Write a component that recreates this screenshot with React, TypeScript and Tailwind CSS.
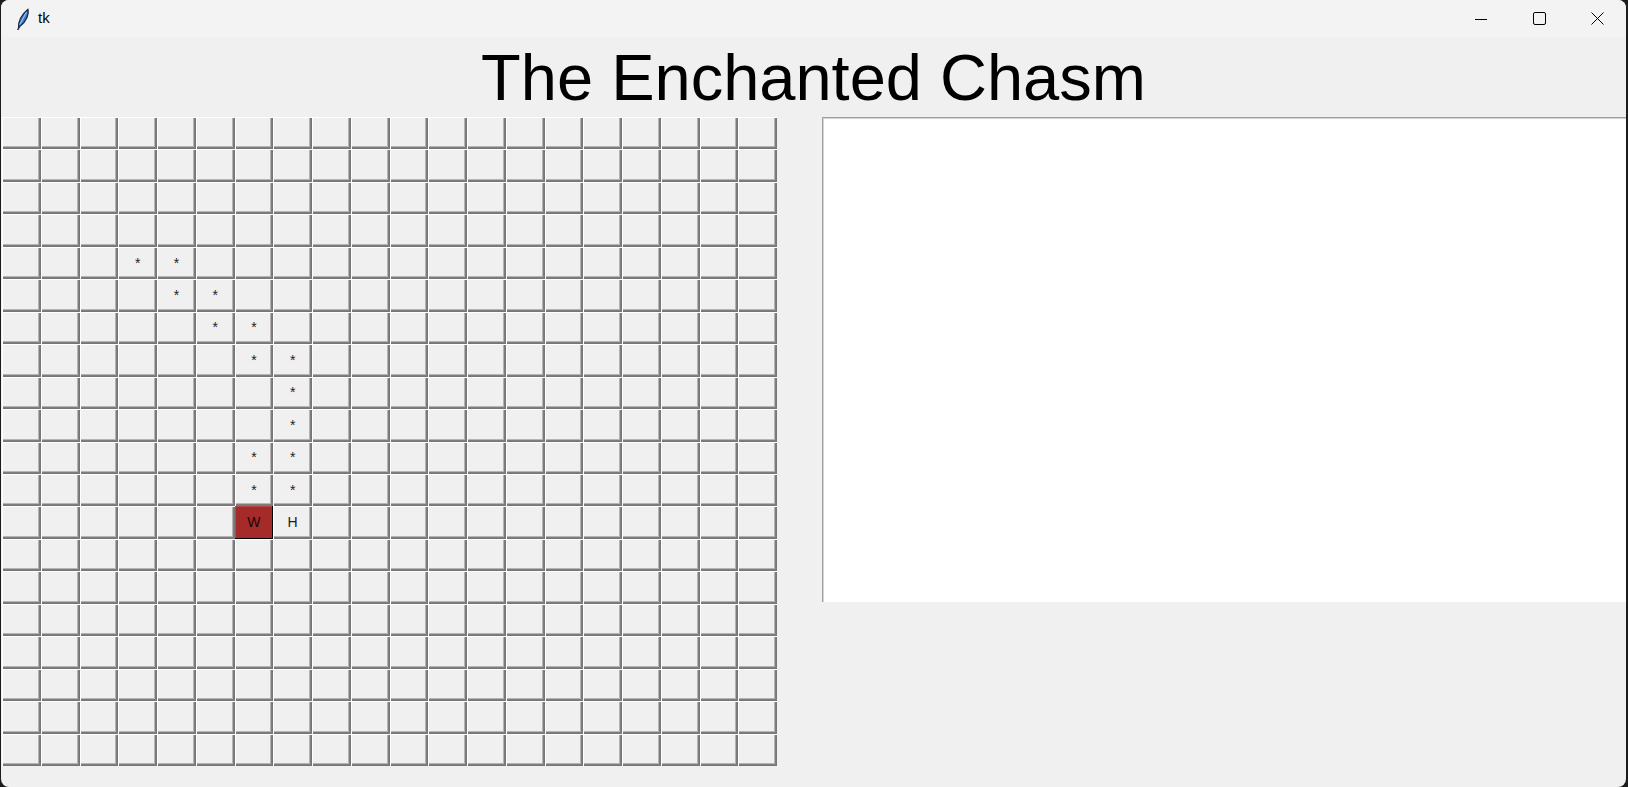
import React from 'react'

const ROWS = 20
const COLS = 20

// row-col -> label
const marks: Record<string, string> = {
  '4-3': '*', '4-4': '*',
  '5-4': '*', '5-5': '*',
  '6-5': '*', '6-6': '*',
  '7-6': '*', '7-7': '*',
  '8-7': '*',
  '9-7': '*',
  '10-6': '*', '10-7': '*',
  '11-6': '*', '11-7': '*',
  '12-6': 'W', '12-7': 'H',
}

function Feather() {
  return (
    <svg width="14" height="22" viewBox="0 0 14 22">
      <path d="M2.5 20.5 C2 15 4 8 12 1.2 C13 6 11 13 4 18.2 Z" fill="#3f7fd0" stroke="#1b2a44" strokeWidth="1.3" strokeLinejoin="round" />
      <path d="M3.8 16.5 L10.5 4" stroke="#a8cdf4" strokeWidth="1" />
      <path d="M2.5 20.5 L1.8 21.8" stroke="#1b2a44" strokeWidth="1.4" strokeLinecap="round" />
    </svg>
  )
}

function Cell({ label }: { label?: string }) {
  if (label === 'W') {
    return (
      <div className="flex items-center justify-center bg-[#a52a2a] text-[14px] text-[#1a0505] shadow-[inset_-1px_-1px_0_#000000,inset_1px_1px_0_#b84848]">
        W
      </div>
    )
  }
  return (
    <div className="flex items-center justify-center bg-[#f0f0f0] text-[14px] text-[#222] shadow-[inset_1px_1px_0_#ffffff,inset_-1px_-1px_0_#767676,inset_-2px_-2px_0_#7e7e7e,inset_-3px_-3px_0_#b4b4b4]">
      {label}
    </div>
  )
}

export default function App() {
  const cells = []
  for (let r = 0; r < ROWS; r++) {
    for (let c = 0; c < COLS; c++) {
      cells.push(<Cell key={`${r}-${c}`} label={marks[`${r}-${c}`]} />)
    }
  }

  return (
    <div className="flex h-[787px] w-[1628px] bg-[#1c1c1c] pl-[1px] pr-[2px]" style={{ fontFamily: '"Liberation Sans", Arial, sans-serif' }}>
      <div className="flex flex-1 flex-col overflow-hidden rounded-[8px] bg-[#f0f0f0]">
        {/* title bar */}
        <div className="flex h-[37px] shrink-0 items-center bg-[#f3f3f3]">
          <div className="ml-[15px] mt-[1px]"><Feather /></div>
          <span className="ml-[8px] text-[15px] text-black">tk</span>
          <div className="ml-auto flex h-full">
            <div className="flex w-[58px] items-center justify-center">
              <svg width="12" height="12" viewBox="0 0 12 12"><path d="M0 6.5 H12" stroke="#000" strokeWidth="1" /></svg>
            </div>
            <div className="flex w-[58px] items-center justify-center">
              <svg width="13" height="13" viewBox="0 0 13 13"><rect x="0.5" y="0.5" width="12" height="12" rx="1.5" fill="none" stroke="#000" strokeWidth="1" /></svg>
            </div>
            <div className="flex w-[58px] items-center justify-center">
              <svg width="13" height="13" viewBox="0 0 13 13"><path d="M0.5 0.5 L12.5 12.5 M12.5 0.5 L0.5 12.5" stroke="#000" strokeWidth="1" /></svg>
            </div>
          </div>
        </div>

        {/* heading */}
        <div className="flex h-[80px] shrink-0 items-center justify-center">
          <h1 className="text-[65px] leading-none text-black">The Enchanted Chasm</h1>
        </div>

        {/* board + canvas */}
        <div className="flex items-start">
          <div className="ml-[1px] grid h-[649px] w-[775px] shrink-0 grid-cols-[repeat(20,1fr)] grid-rows-[repeat(20,1fr)]">
            {cells}
          </div>
          <div className="ml-[45px] h-[485px] flex-1 bg-white shadow-[inset_1px_1px_0_#a0a0a0,inset_2px_2px_0_#d4d4d4]" />
        </div>
      </div>
    </div>
  )
}
